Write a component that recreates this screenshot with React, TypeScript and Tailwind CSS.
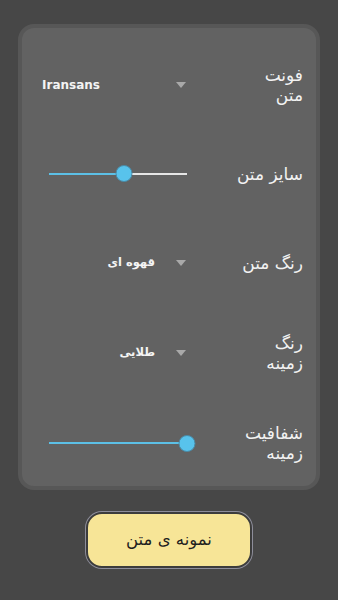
import React from 'react';

const Arrow = () => (
    <svg width="10" height="6" viewBox="0 0 10 6" className="shrink-0">
        <path d="M0 0 L10 0 L5 6 Z" fill="#a9a9a9" />
    </svg>
);

const Label = ({ lines }: { lines: string[] }) => (
    <div dir="rtl" className="w-[90px] text-right text-[17px] leading-[20px] text-[#f2f2f2]">
        {lines.map((l) => (
            <div key={l}>{l}</div>
        ))}
    </div>
);

const Spinner = ({ value, latin }: { value: string; latin?: boolean }) => (
    <div className="flex items-center w-[144px] ml-[20px]">
        {latin ? (
            <span className="flex-1 text-left text-[12px] font-semibold text-[#f4f4f4] [font-family:'DejaVu_Sans',sans-serif]">
                {value}
            </span>
        ) : (
            <span dir="rtl" className="flex-1 text-right pr-[21px] text-[11.5px] font-bold text-[#f4f4f4]">
                {value}
            </span>
        )}
        <Arrow />
    </div>
);

const Slider = ({ pct }: { pct: number }) => (
    <div className="relative w-[138px] h-[18px] ml-[27px] flex items-center">
        <div className="w-full h-[2px] bg-[#e6e6e6]" />
        <div className="absolute left-0 h-[2px] bg-[#5cc0e6]" style={{ width: `${pct}%` }} />
        <div
            className="absolute w-[17px] h-[17px] rounded-full bg-[#58c3ec] border border-[#4a8aa6] -translate-x-1/2"
            style={{ left: `${pct}%` }}
        />
    </div>
);

export default function App() {
    return (
        <div className="w-[338px] h-[600px] bg-[#474747] pt-[24px] [font-family:'DejaVu_Sans',sans-serif]">
            <div className="mx-[18px] h-[466px] rounded-[16px] border-4 border-[#575757] bg-[#626262] pt-[12px]">
                <div className="flex items-center justify-between h-[89px] pr-[13px]">
                    <Spinner value="Iransans" latin />
                    <Label lines={['فونت', 'متن']} />
                </div>
                <div className="flex items-center justify-between h-[89px] pr-[13px]">
                    <Slider pct={54} />
                    <Label lines={['سایز متن']} />
                </div>
                <div className="flex items-center justify-between h-[90px] pr-[13px]">
                    <Spinner value="قهوه ای" />
                    <Label lines={['رنگ متن']} />
                </div>
                <div className="flex items-center justify-between h-[90px] pr-[13px]">
                    <Spinner value="طلایی" />
                    <Label lines={['رنگ', 'زمینه']} />
                </div>
                <div className="flex items-center justify-between h-[90px] pr-[13px]">
                    <Slider pct={100} />
                    <Label lines={['شفافیت', 'زمینه']} />
                </div>
            </div>
            <div className="flex justify-center mt-[22px]">
                <button className="w-[166px] h-[56px] rounded-[16px] bg-[#f7e597] border-2 border-[#3c3c3c] ring-1 ring-[#8d8d9a] text-[16.5px] text-[#1e1e1e]" dir="rtl">
                    نمونه ی متن
                </button>
            </div>
        </div>
    );
}
